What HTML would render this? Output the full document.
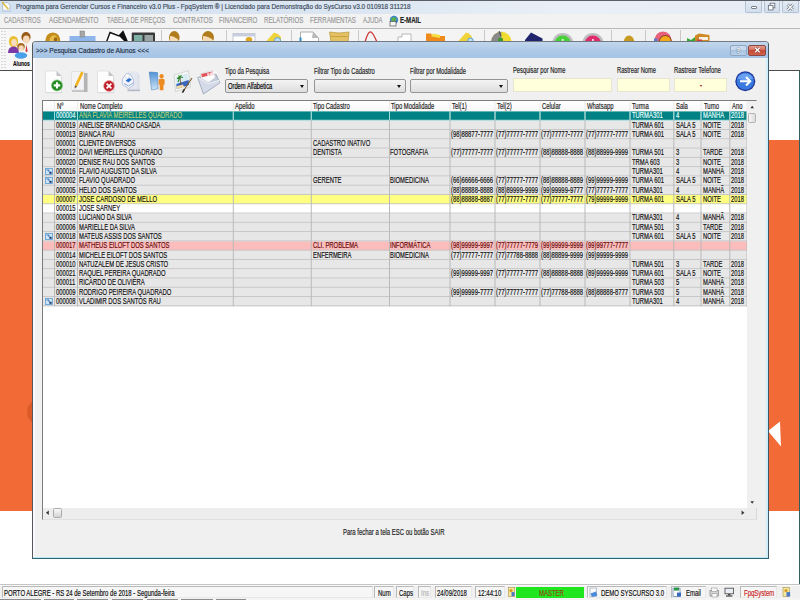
<!DOCTYPE html>
<html lang="pt-BR"><head><meta charset="utf-8"><title>Pesquisa Cadastro de Alunos</title>
<style>
html,body{margin:0;padding:0;}
body{width:800px;height:600px;overflow:hidden;position:relative;background:#fff;font-family:"Liberation Sans",sans-serif;}
.a{position:absolute;}
.t{position:absolute;white-space:nowrap;font-size:8.7px;line-height:10px;color:#111;-webkit-text-stroke:.18px;transform:scaleX(.676);transform-origin:0 0;}
.m{color:#9a9a9a;font-size:8px;transform:scaleX(.8);}
.tt{color:#3b4a5c;font-size:7.8px;transform:scaleX(.82);}
.dt{color:#1e2d45;font-size:7.8px;transform:scaleX(.83);}
.sb{font-size:8.2px;transform:scaleX(.73);color:#111;}
.lb{color:#222;}
.row{position:absolute;left:43px;width:702.8px;height:8.4px;background:#eaeaea;}
.vl{position:absolute;top:101px;width:1px;background:#b4b4b4;}
.sel{background:#008284;}
.yel{background:#ffff82;}
.wht{background:#ffffff;}
.pnk{background:#fbbcbc;}
.cb{position:absolute;top:79.3px;height:11.6px;border:1px solid #949494;border-radius:2px;background:linear-gradient(#f4f4f4,#dedede);box-sizing:content-box;}
.cb i{position:absolute;right:3.5px;top:5px;width:0;height:0;border-left:2.5px solid transparent;border-right:2.5px solid transparent;border-top:3px solid #111;}
.in{position:absolute;top:77.5px;height:14.5px;background:#ffffdc;border:1px solid #e6e6d0;box-sizing:border-box;}
.pn{position:absolute;top:586px;height:12px;border:1px solid #b9b9b9;border-right-color:#e8e8e8;border-bottom-color:#e8e8e8;box-sizing:border-box;background:#f6f6f6;}
.sep{position:absolute;top:30px;width:1px;height:12px;background:#c8c8c8;}
</style></head><body>

<div class="a" style="left:0;top:0;width:800px;height:14px;background:linear-gradient(90deg,#d3e1f0 0%,#dbe6f2 45%,#e9eff6 70%,#e6edf5 100%);"></div>
<div class="a" style="left:0;top:0;width:800px;height:1.2px;background:#5c6066;"></div>
<div class="a" style="left:0;top:14px;width:800px;height:14.5px;background:#f2f2f2;"></div>
<div class="a" style="left:0;top:28px;width:800px;height:1px;background:#b9b9b9;"></div>
<div class="a" style="left:0;top:29px;width:800px;height:41.5px;background:linear-gradient(90deg,#f7f7f7,#f1f1f1);"></div>
<div class="a" style="left:0;top:70.2px;width:800px;height:1.3px;background:#4c4c4c;"></div>
<div class="a" style="left:799px;top:71px;width:1px;height:513px;background:#2f5f5f;"></div>
<div class="a" style="left:0;top:140px;width:799px;height:371px;background:#f26a36;"></div>
<div class="a" style="left:27.4px;top:398.5px;width:26px;height:26px;border-radius:50%;background:#dc5a28;"></div>
<svg class="a" style="left:768px;top:420px" width="16" height="30"><polygon points="0,11 12,1.5 13,26.5" fill="#fff"/></svg>
<svg class="a" style="left:1px;top:1px" width="12" height="12"><path d="M1.6 1.6 L6.4 1.6 L9 4.2 L9 10.4 L1.6 10.4 Z" fill="#fbfbf6" stroke="#9aaec4" stroke-width=".7"/><path d="M1.6 8.6 H9 V10.4 H1.6 Z" fill="#cfdcec"/><path d="M1 1 L7.4 8.2" stroke="#e8cc50" stroke-width="1.6"/><path d="M1 1 L7.4 8.2" stroke="#a88a30" stroke-width=".4"/></svg>
<span class="t tt" style="left:16.4px;top:2.0px;font-size:7.9px;transform:scaleX(0.808);">Programa para Gerenciar Cursos e Financeiro v3.0 Plus - FpqSystem ® | Licenciado para  Demonstração do SysCurso v3.0 010918 311218</span>
<div class="a" style="left:745px;top:1px;width:17px;height:11.5px;border:1px solid #b3c2d4;border-top:none;border-radius:0 0 2px 2px;box-sizing:border-box;background:linear-gradient(#e3ebf4,#d2deeb);"></div>
<div class="a" style="left:763.5px;top:1px;width:16.5px;height:11.5px;border:1px solid #b3c2d4;border-top:none;border-radius:0 0 2px 2px;box-sizing:border-box;background:linear-gradient(#e3ebf4,#d2deeb);"></div>
<div class="a" style="left:782px;top:1px;width:16.5px;height:11.5px;border:1px solid #b3c2d4;border-top:none;border-radius:0 0 2px 2px;box-sizing:border-box;background:linear-gradient(#e3ebf4,#d2deeb);"></div>
<div class="a" style="left:750.5px;top:6.2px;width:6px;height:2.4px;border:1px solid #77818c;border-radius:1px;box-sizing:border-box;background:#fff;"></div>
<svg class="a" style="left:767px;top:2px" width="10" height="10"><rect x="3.2" y="1.2" width="4.6" height="4.6" fill="#fff" stroke="#6c7682" stroke-width=".9"/><rect x="1.4" y="3.4" width="4.6" height="4.6" fill="#fff" stroke="#6c7682" stroke-width=".9"/></svg>
<svg class="a" style="left:786px;top:2.5px" width="9" height="9"><path d="M1.5 1.5 L7 7 M7 1.5 L1.5 7" stroke="#6c7682" stroke-width="2.6"/><path d="M1.5 1.5 L7 7 M7 1.5 L1.5 7" stroke="#fff" stroke-width="1.2"/></svg>
<span class="t m" style="left:4.3px;top:15.3px;font-size:8.4px;transform:scaleX(0.702);">CADASTROS</span>
<span class="t m" style="left:49.0px;top:15.3px;font-size:8.4px;transform:scaleX(0.754);">AGENDAMENTO</span>
<span class="t m" style="left:106.5px;top:15.3px;font-size:8.4px;transform:scaleX(0.705);">TABELA DE PREÇOS</span>
<span class="t m" style="left:172.5px;top:15.3px;font-size:8.4px;transform:scaleX(0.770);">CONTRATOS</span>
<span class="t m" style="left:218.5px;top:15.3px;font-size:8.4px;transform:scaleX(0.743);">FINANCEIRO</span>
<span class="t m" style="left:263.5px;top:15.3px;font-size:8.4px;transform:scaleX(0.738);">RELATÓRIOS</span>
<span class="t m" style="left:309.5px;top:15.3px;font-size:8.4px;transform:scaleX(0.732);">FERRAMENTAS</span>
<span class="t m" style="left:362.5px;top:15.3px;font-size:8.4px;transform:scaleX(0.708);">AJUDA</span>
<svg class="a" style="left:389px;top:14.6px" width="10" height="12"><circle cx="5" cy="5" r="4.2" fill="#3d86c8"/><path d="M2.4 3.5 Q4.5 1 7.5 3.5 Q5.5 6 7 8.2 Q3.6 9 2.4 6.5 Z" fill="#5fb04a"/><rect x="1" y="6.6" width="6" height="4.4" fill="#f6f6f6" stroke="#555" stroke-width=".7"/></svg>
<span class="t m" style="left:400.0px;top:15.3px;font-size:8.3px;transform:scaleX(0.735);font-weight:bold;color:#222;">E-MAIL</span>
<svg class="a" style="left:0;top:30px" width="8" height="40"><rect x="1.5" y="1" width="1" height="1" fill="#b8b8b8"/><rect x="4.5" y="1" width="1" height="1" fill="#b8b8b8"/><rect x="1.5" y="4" width="1" height="1" fill="#b8b8b8"/><rect x="4.5" y="4" width="1" height="1" fill="#b8b8b8"/><rect x="1.5" y="7" width="1" height="1" fill="#b8b8b8"/><rect x="4.5" y="7" width="1" height="1" fill="#b8b8b8"/><rect x="1.5" y="10" width="1" height="1" fill="#b8b8b8"/><rect x="4.5" y="10" width="1" height="1" fill="#b8b8b8"/><rect x="1.5" y="13" width="1" height="1" fill="#b8b8b8"/><rect x="4.5" y="13" width="1" height="1" fill="#b8b8b8"/><rect x="1.5" y="16" width="1" height="1" fill="#b8b8b8"/><rect x="4.5" y="16" width="1" height="1" fill="#b8b8b8"/><rect x="1.5" y="19" width="1" height="1" fill="#b8b8b8"/><rect x="4.5" y="19" width="1" height="1" fill="#b8b8b8"/><rect x="1.5" y="22" width="1" height="1" fill="#b8b8b8"/><rect x="4.5" y="22" width="1" height="1" fill="#b8b8b8"/><rect x="1.5" y="25" width="1" height="1" fill="#b8b8b8"/><rect x="4.5" y="25" width="1" height="1" fill="#b8b8b8"/><rect x="1.5" y="28" width="1" height="1" fill="#b8b8b8"/><rect x="4.5" y="28" width="1" height="1" fill="#b8b8b8"/><rect x="1.5" y="31" width="1" height="1" fill="#b8b8b8"/><rect x="4.5" y="31" width="1" height="1" fill="#b8b8b8"/><rect x="1.5" y="34" width="1" height="1" fill="#b8b8b8"/><rect x="4.5" y="34" width="1" height="1" fill="#b8b8b8"/><rect x="1.5" y="37" width="1" height="1" fill="#b8b8b8"/><rect x="4.5" y="37" width="1" height="1" fill="#b8b8b8"/></svg>
<svg class="a" style="left:5px;top:30px" width="28" height="30" viewBox="0 0 28 30">
<ellipse cx="21" cy="7" rx="4.6" ry="5" fill="#9a5a18"/><ellipse cx="21.3" cy="9.5" rx="3.3" ry="4" fill="#f6d9b8"/>
<path d="M16 22 Q16 14 21 14 Q27 14 27 22 Z" fill="#f4f4f4"/><path d="M21.5 14.5 L22.6 21 L21.5 22.5 L20.5 21 Z" fill="#d0303a"/>
<ellipse cx="8.5" cy="11.5" rx="4.6" ry="5.6" fill="#e8c030"/><ellipse cx="9" cy="12.5" rx="2.8" ry="3.4" fill="#f8dcc0"/>
<path d="M3 23 Q3 16.5 8.5 16.5 Q14 16.5 14 23 Z" fill="#7a3aa8"/>
<ellipse cx="16" cy="16.5" rx="3.8" ry="3.6" fill="#a86a20"/><ellipse cx="16.2" cy="18" rx="2.6" ry="2.7" fill="#f6d9b8"/>
<ellipse cx="16" cy="25.5" rx="6.2" ry="3.2" fill="#4aa0e8"/>
</svg>
<span class="t " style="left:13.2px;top:59.4px;font-size:7.8px;transform:scaleX(0.636);font-weight:bold;color:#111;">Alunos</span>
<svg class="a" style="left:0;top:28px" width="800" height="14.5" viewBox="0 0 800 14.5">
<path d="M45.2 14.5 Q45.4 4.5 53 4.5 Q60.2 4.5 60.4 14.5 Z" fill="#c48c18"/><path d="M49 14.5 Q49.5 7.5 54 7.2 Q58 7.5 58 14.5 Z" fill="#e6bc4a"/><ellipse cx="55.6" cy="11.6" rx="1.7" ry="2.3" fill="#9a6810"/>
<rect x="69.5" y="8" width="26" height="6" fill="#8fb6ea"/><rect x="80" y="3" width="4.5" height="6" fill="#a8a8a8" stroke="#777" stroke-width=".5"/>
<path d="M106.5 14 L110 4.5 L119 8 L123 3.5 L127 13 L127 14 Z" fill="#fff" stroke="#111" stroke-width="1.4"/><path d="M119 8 L123 3.5 L127 13 L124 13 Z" fill="#111"/>
<rect x="131.7" y="4.5" width="23.3" height="10" rx="1" fill="#3a3a3a"/><rect x="134" y="7" width="8.5" height="6" fill="#7fb0a8"/><rect x="144.5" y="7" width="8.5" height="6" fill="#9aa4a4"/>
<ellipse cx="174.3" cy="9.5" rx="5.3" ry="6.5" fill="#b07c1c"/><path d="M170 8 Q174 8 178.5 12 L178.5 15 L170 15 Z" fill="#f6ddb8"/>
<ellipse cx="208" cy="9.5" rx="6" ry="6.5" fill="#b07c1c"/><path d="M203 8 Q208 8 213 12 L213 15 L203 15 Z" fill="#f6ddb8"/>
<rect x="233" y="5.5" width="22" height="9" fill="#fff" stroke="#b8bcc8" stroke-width=".8"/><rect x="233" y="5.5" width="22" height="3" fill="#c8cede"/><ellipse cx="249" cy="11.5" rx="3.3" ry="2.6" fill="#e0a820"/>
<path d="M266 13.5 L274 4.5 L278 6 L281 9 L281 14 L266 14 Z" fill="#f0d23c"/><circle cx="277.5" cy="12.5" r="3" fill="#bfe0f4" stroke="#4a9ad8" stroke-width=".9"/>
<path d="M300.5 14 L300.5 4 L313 4 L318.5 10 L318.5 14 Z" fill="#fff" stroke="#9a9a9a" stroke-width=".8"/><path d="M313 4 L318.5 10 L312 10 Z" fill="#b8b8b8"/><rect x="299.5" y="9.5" width="2" height="4.5" fill="#2a8ac8"/>
<path d="M329.5 4 Q339 6 349 4 L348 14 L331 14 Z" fill="#e4c264" stroke="#b89030" stroke-width=".7"/><rect x="331" y="8" width="16.5" height="1" fill="#c8a040"/>
<path d="M365 14 Q368 3 371 4 Q373 5 377 14" fill="none" stroke="#d03434" stroke-width="1.3"/>
<path d="M398 14 L398 9 L402 9 L402 6 L411 6 L411 14" fill="#fff" stroke="#a8a8a8" stroke-width=".8"/>
<path d="M426 14 L426 5.5 L431 5.5 L432.5 8 L445 8 L445 14 Z" fill="#f08a1a"/><path d="M431 8.5 L433 5.5 L440 7 L440 10 Z" fill="#f4dc40"/>
<path d="M458 13.5 L466 4.5 L469 5.5 L472 9 L472 14 L458 14 Z" fill="#f0d23c"/><circle cx="470.5" cy="12.8" r="2.8" fill="#bfe0f4" stroke="#4a9ad8" stroke-width=".9"/>
<path d="M491 14 A10.3 10.3 0 0 1 511.6 14 Z" fill="#f0dc30"/><path d="M491 14 A10.3 10.3 0 0 1 501.3 3.7 L501.3 14 Z" fill="#8a8a8a"/><circle cx="500.5" cy="12" r="2.6" fill="#3c9a30"/><path d="M499 3 L501 8" stroke="#444" stroke-width="1"/>
<path d="M525 12 L531 4.5 L542.5 10.5 L542.5 14 L525 14 Z" fill="#20246c"/>
<circle cx="562.7" cy="16" r="10.9" fill="#bdbdbd"/><circle cx="562.7" cy="16" r="8.4" fill="#48d038"/><rect x="561.8" y="11" width="1.8" height="4" fill="#d8f8d0"/>
<circle cx="592.9" cy="16" r="10.9" fill="#bdbdbd"/><circle cx="592.9" cy="16" r="8.4" fill="#e02c6c"/><rect x="592" y="11" width="1.8" height="4" fill="#fbd0e0"/>
<path d="M623.8 14 A5.2 6.5 0 0 1 634.2 14 Z" fill="#c89a20"/>
<path d="M654 14 Q655 3.5 663 3.5 Q671 3.5 672 14 Z" fill="#e8607a"/><path d="M659 14 Q660 7.5 665.5 7.5 Q671 8 671.5 14 Z" fill="#f4a81c" stroke="#5a2a10" stroke-width=".7"/><rect x="654" y="10.5" width="3.4" height="3.5" fill="#5a78d0"/>
<path d="M687 10 L691 12 L695 9 L695 14 L687 14 Z" fill="#38a838"/><path d="M695 7.5 L699 5.5 L709.5 7 L709.5 14 L695 14 Z" fill="#d08a24"/><rect x="699" y="9" width="9" height="3" fill="#f8f0e0"/><rect x="697" y="11.5" width="5" height="2.5" fill="#d03a3a"/>
</svg>
<div class="sep" style="left:161px"></div>
<div class="sep" style="left:226.3px"></div>
<div class="sep" style="left:291px"></div>
<div class="sep" style="left:357.5px"></div>
<div class="sep" style="left:483.8px"></div>
<div class="sep" style="left:610.5px"></div>
<div class="sep" style="left:645.3px"></div>
<div class="sep" style="left:680px"></div>
<div class="a" style="left:31.5px;top:41.3px;width:737px;height:518px;box-sizing:border-box;border:1px solid #4a545e;border-color:#727a84 #3f5a66 #2f6676 #585858;border-radius:4px 4px 0 0;background:#f0f0f0;overflow:hidden;">
<div class="a" style="left:0;top:0;width:737px;height:15.6px;background:linear-gradient(#c2d6ec,#afcae8 50%,#a5c3e5);"></div>
<div class="a" style="left:0;top:15.6px;width:2px;height:502px;background:#f7f9fc;"></div>
<div class="a" style="left:733.6px;top:15.6px;width:1.6px;height:502px;background:#cdeef8;"></div>
<div class="a" style="left:0;top:514.3px;width:737px;height:1.8px;background:#b8eaf4;"></div>
</div>
<span class="t dt" style="left:35.9px;top:45.7px;font-size:8px;transform:scaleX(0.822);">&gt;&gt;&gt; Pesquisa Cadastro de Alunos &lt;&lt;&lt;</span>
<div class="a" style="left:730px;top:44.5px;width:16.5px;height:11px;box-sizing:border-box;border:1px solid #8fa6c0;border-radius:2px;background:linear-gradient(#c9daee 45%,#a9c3e2 50%,#b9d0ea);"></div>
<span class="t " style="left:736.0px;top:45.6px;font-weight:bold;font-size:8px;color:#fff;text-shadow:0 0 1.2px #344a66,0 0 1.2px #344a66;transform:scaleX(.9)">?</span>
<div class="a" style="left:748px;top:44.5px;width:17.5px;height:11px;box-sizing:border-box;border:1px solid #8a4a44;border-radius:2px;background:linear-gradient(#e39a8c 0%,#d7705e 45%,#c44a36 50%,#d0604c 100%);"></div>
<svg class="a" style="left:752.5px;top:46px" width="9" height="8"><path d="M2.2 1.8 L6.6 6.2 M6.6 1.8 L2.2 6.2" stroke="#8a4038" stroke-width="2.4"/><path d="M2.2 1.8 L6.6 6.2 M6.6 1.8 L2.2 6.2" stroke="#fff" stroke-width="1.3"/></svg>
<svg class="a" style="left:0;top:0" width="800" height="100" viewBox="0 0 800 100">
<g><path d="M46.2 72 L57 72 L62.2 77 L62.2 93.2 L46.2 93.2 Z" fill="#d6d6d6"/><path d="M45.5 71 L56.5 71 L61.5 76 L61.5 92.5 L45.5 92.5 Z" fill="#fdfdfd" stroke="#d4d4d4" stroke-width=".6"/><path d="M56.5 71 L61.5 76 L56.5 76 Z" fill="#c4c4c4"/>
<circle cx="57" cy="85.4" r="5.5" fill="#258a22" stroke="#7cc878" stroke-width=".7"/><path d="M53.8 85.4 H60.2 M57 82.2 V88.6" stroke="#fff" stroke-width="2.1"/></g>
<g><rect x="72" y="73" width="15" height="19" fill="#c4c4c4"/><path d="M71.5 71.5 L84 71.5 L84 90 L71.5 90 Z" fill="#f4f4f8" stroke="#d4d4d8" stroke-width=".5"/><rect x="84" y="73" width="3.5" height="19" fill="#b4b4b4"/>
<path d="M81.2 71.5 L83.6 72.8 L77.2 86.5 L74.8 85.2 Z" fill="#f2b41c"/><path d="M74.8 85.2 L77.2 86.5 L74.6 88.8 Z" fill="#6a5a40"/></g>
<g><path d="M98.2 72 L109 72 L114.2 77 L114.2 93.2 L98.2 93.2 Z" fill="#d6d6d6"/><path d="M97.5 71 L108.5 71 L113.5 76 L113.5 92.5 L97.5 92.5 Z" fill="#fdfdfd" stroke="#d4d4d4" stroke-width=".6"/><path d="M108.5 71 L113.5 76 L108.5 76 Z" fill="#c4c4c4"/>
<circle cx="109" cy="86" r="5.4" fill="#c0202a" stroke="#e89a9a" stroke-width=".6"/><path d="M106.6 83.6 L111.4 88.4 M111.4 83.6 L106.6 88.4" stroke="#fff" stroke-width="1.7"/></g>
<g><path d="M128 71.5 L136.5 71.5 L140 75 L140 91 L127.5 91 Z" fill="#e4e7f0"/><path d="M127.5 89.6 H140 V91.2 H127.5 Z" fill="#b4b8c6"/><path d="M138.2 74 V90" stroke="#c4c8d4" stroke-width=".7" stroke-dasharray="1 1"/>
<path d="M122.3 79 L126.5 73.2 L130.5 74.5 L133.6 80 L133.6 85 L128.5 88.6 L122.3 84.5 Z" fill="#f2f5fb" stroke="#a8b6d4" stroke-width=".8"/><path d="M125.6 80.6 L129.2 78 L131.8 79.6 L128.4 82.6 Z" fill="#2f6fc8"/><path d="M124 83.5 L128.4 86 L133 83" stroke="#8aa0cc" stroke-width=".9" fill="none"/><path d="M126.2 73.6 L129.8 74.8 L128 78.5 L124.6 77 Z" fill="#fff" stroke="#b8c4dc" stroke-width=".5"/></g>
<g><defs><linearGradient id="bk" x1="0" y1="0" x2="0" y2="1"><stop offset="0" stop-color="#4f92d6"/><stop offset="1" stop-color="#cfe4f6"/></linearGradient></defs>
<path d="M149.2 72 L157.6 72.6 L158 88.8 L151.6 90 Z" fill="url(#bk)" stroke="#3a78b8" stroke-width=".5"/>
<circle cx="161.6" cy="76.2" r="2.1" fill="#ee8a22"/><path d="M158.6 79.4 Q161.6 77.8 164.6 79.4 L164.6 84.6 L163.6 84.6 L163.4 90.2 L159.8 90.2 L159.6 84.6 L158.6 84.6 Z" fill="#ee8a22"/></g>
<g><path d="M174 75 L188.5 70.5 L190.5 87 L175.5 91.5 Z" fill="#f4f6f4" stroke="#b8c4bc" stroke-width=".6"/><path d="M175.5 77.5 L187.5 73.5 L189 85 L176.8 89 Z" fill="#d8ecf4"/><path d="M176.3 84 L188.6 80 L189 85 L176.8 89 Z" fill="#3a66c0"/><path d="M176.5 86.3 L183 84.5 L184 87 L176.8 89 Z" fill="#f0dca0"/>
<path d="M180 77 L178 82 M180 77 L177 78.5 M180 77 L183 77.5 M180 77 L181.5 75 M180 77 L178.5 75.5" stroke="#2a8a30" stroke-width="1.1"/><path d="M180 77.5 L180.8 85" stroke="#6a4a20" stroke-width=".8"/>
<path d="M192 78 L184 90" stroke="#7a5a30" stroke-width="1.1"/><path d="M184.4 89.4 L182.4 92.6" stroke="#222" stroke-width="1.6"/></g>
<g><path d="M197.6 77.4 L215.6 73.6 L220 82.8 L203.4 94 Z" fill="#c2cadb" stroke="#8c96ac" stroke-width=".7"/>
<path d="M200.4 73.6 L212.6 70.6 L215.4 77.4 L208.6 82.6 L201.4 78.4 Z" fill="#fbfbfb" stroke="#c8c8d0" stroke-width=".5"/><path d="M201.2 74 L212.4 71.4 L213.4 74.4 L202 77.2 Z" fill="#e05656"/><path d="M198.4 78 L208.6 83.6 L219 80.4 L219.6 82.6 L203.6 93.2 Z" fill="#d4dae8"/><path d="M198.4 78 L208.6 83.6 L219 80.4" fill="none" stroke="#f4f6fa" stroke-width=".9"/></g>
<g><circle cx="745.3" cy="81.2" r="10" fill="#203a9a"/><circle cx="745.3" cy="81.2" r="8.6" fill="#3a7ae0"/><path d="M737.5 78.5 A8.6 8.6 0 0 1 753.1 78.5 Q745.3 82 737.5 78.5 Z" fill="#6aa0f0"/>
<path d="M740 81.2 H749.6 M746 77 L750.2 81.2 L746 85.4" stroke="#fff" stroke-width="2.1" fill="none"/></g>
</svg>
<span class="t " style="left:207.0px;top:72.6px;font-size:3.4px;font-weight:bold;color:#fff;transform:rotate(-16deg) scaleX(.8);line-height:4px">E-MAIL</span>
<span class="t lb" style="left:225.4px;top:66.4px;font-size:8.5px;transform:scaleX(0.676);">Tipo da Pesquisa</span>
<span class="t lb" style="left:313.7px;top:66.4px;font-size:8.5px;transform:scaleX(0.685);">Filtrar Tipo do Cadastro</span>
<span class="t lb" style="left:410.0px;top:66.0px;font-size:8.5px;transform:scaleX(0.677);">Filtrar por Modalidade</span>
<span class="t lb" style="left:513.0px;top:64.6px;font-size:8.5px;transform:scaleX(0.678);">Pesquisar por Nome</span>
<span class="t lb" style="left:617.0px;top:64.6px;font-size:8.5px;transform:scaleX(0.677);">Rastrear Nome</span>
<span class="t lb" style="left:673.8px;top:64.6px;font-size:8.5px;transform:scaleX(0.699);">Rastrear Telefone</span>
<div class="cb" style="left:225px;width:81px"><i></i></div>
<div class="cb" style="left:313.8px;width:90px"><i></i></div>
<div class="cb" style="left:410px;width:95.5px"><i></i></div>
<span class="t lb" style="left:227.6px;top:80.6px;font-size:8.7px;transform:scaleX(0.664);color:#000">Ordem Alfabetica</span>
<div class="in" style="left:513px;width:99px"></div>
<div class="in" style="left:617px;width:52.5px"></div>
<div class="in" style="left:673.8px;width:53.2px"></div>
<span class="t " style="left:700.0px;top:79.5px;color:#a01818;font-weight:bold">-</span>
<div class="a" style="left:42.3px;top:100.2px;width:715px;height:419.5px;box-sizing:border-box;border:1px solid #7c7c7c;border-right-color:#d8d8d8;border-bottom-color:#e0e0e0;background:#fff;"></div>
<div class="a" style="left:43.3px;top:101.2px;width:703.7px;height:10.2px;background:linear-gradient(#ffffff,#f7f7f7);"></div>
<span class="t lb" style="left:56.6px;top:100.6px;">Nº</span>
<span class="t lb" style="left:79.6px;top:100.6px;">Nome Completo</span>
<span class="t lb" style="left:235.1px;top:100.6px;">Apelido</span>
<span class="t lb" style="left:313.3px;top:100.6px;">Tipo Cadastro</span>
<span class="t lb" style="left:390.8px;top:100.6px;">Tipo Modalidade</span>
<span class="t lb" style="left:452.1px;top:100.6px;">Tel(1)</span>
<span class="t lb" style="left:497.1px;top:100.6px;">Tel(2)</span>
<span class="t lb" style="left:542.1px;top:100.6px;">Celular</span>
<span class="t lb" style="left:586.6px;top:100.6px;">Whatsapp</span>
<span class="t lb" style="left:631.6px;top:100.6px;">Turma</span>
<span class="t lb" style="left:675.8px;top:100.6px;">Sala</span>
<span class="t lb" style="left:704.1px;top:100.6px;">Turno</span>
<span class="t lb" style="left:731.6px;top:100.6px;">Ano</span>
<svg class="a" style="left:0;top:100px" width="800" height="210" viewBox="0 100 800 210"><rect x="43" y="111.40" width="704" height="9.28" fill="#008284"/><rect x="43" y="120.68" width="704" height="9.28" fill="#e7e7e7"/><rect x="43" y="129.96" width="704" height="9.28" fill="#e7e7e7"/><rect x="43" y="139.24" width="704" height="9.28" fill="#e7e7e7"/><rect x="43" y="148.52" width="704" height="9.28" fill="#e7e7e7"/><rect x="43" y="157.80" width="704" height="9.28" fill="#e7e7e7"/><rect x="43" y="167.08" width="704" height="9.28" fill="#e7e7e7"/><rect x="43" y="176.36" width="704" height="9.28" fill="#e7e7e7"/><rect x="43" y="185.64" width="704" height="9.28" fill="#e7e7e7"/><rect x="43" y="194.92" width="704" height="9.28" fill="#ffff82"/><rect x="43" y="204.20" width="704" height="9.28" fill="#ffffff"/><rect x="43" y="213.48" width="704" height="9.28" fill="#e7e7e7"/><rect x="43" y="222.76" width="704" height="9.28" fill="#e7e7e7"/><rect x="43" y="232.04" width="704" height="9.28" fill="#e7e7e7"/><rect x="43" y="241.32" width="704" height="9.28" fill="#fbbcbc"/><rect x="43" y="250.60" width="704" height="9.28" fill="#e7e7e7"/><rect x="43" y="259.88" width="704" height="9.28" fill="#e7e7e7"/><rect x="43" y="269.16" width="704" height="9.28" fill="#e7e7e7"/><rect x="43" y="278.44" width="704" height="9.28" fill="#e7e7e7"/><rect x="43" y="287.72" width="704" height="9.28" fill="#e7e7e7"/><rect x="43" y="297.00" width="704" height="9.28" fill="#e7e7e7"/><rect x="43" y="119.78" width="704" height=".9" fill="#cfeeee"/><rect x="43" y="129.06" width="704" height=".9" fill="#c4c4c4"/><rect x="43" y="138.34" width="704" height=".9" fill="#c4c4c4"/><rect x="43" y="147.62" width="704" height=".9" fill="#c4c4c4"/><rect x="43" y="156.90" width="704" height=".9" fill="#c4c4c4"/><rect x="43" y="166.18" width="704" height=".9" fill="#c4c4c4"/><rect x="43" y="175.46" width="704" height=".9" fill="#c4c4c4"/><rect x="43" y="184.74" width="704" height=".9" fill="#c4c4c4"/><rect x="43" y="194.02" width="704" height=".9" fill="#c4c4c4"/><rect x="43" y="203.30" width="704" height=".9" fill="#c4c4c4"/><rect x="43" y="212.58" width="704" height=".9" fill="#c4c4c4"/><rect x="43" y="221.86" width="704" height=".9" fill="#c4c4c4"/><rect x="43" y="231.14" width="704" height=".9" fill="#c4c4c4"/><rect x="43" y="240.42" width="704" height=".9" fill="#c4c4c4"/><rect x="43" y="249.70" width="704" height=".9" fill="#c4c4c4"/><rect x="43" y="258.98" width="704" height=".9" fill="#c4c4c4"/><rect x="43" y="268.26" width="704" height=".9" fill="#c4c4c4"/><rect x="43" y="277.54" width="704" height=".9" fill="#c4c4c4"/><rect x="43" y="286.82" width="704" height=".9" fill="#c4c4c4"/><rect x="43" y="296.10" width="704" height=".9" fill="#c4c4c4"/><rect x="43" y="305.38" width="704" height=".9" fill="#c4c4c4"/><rect x="54.0" y="101.2" width="1" height="10.2" fill="#ececec"/><rect x="54.0" y="111.40" width="1" height="194.88" fill="#bababa"/><rect x="54.0" y="111.40" width="1" height="8.38" fill="#9adede"/><rect x="77.0" y="101.2" width="1" height="10.2" fill="#ececec"/><rect x="77.0" y="111.40" width="1" height="194.88" fill="#bababa"/><rect x="77.0" y="111.40" width="1" height="8.38" fill="#9adede"/><rect x="232.8" y="101.2" width="1" height="10.2" fill="#ececec"/><rect x="232.8" y="111.40" width="1" height="194.88" fill="#bababa"/><rect x="232.8" y="111.40" width="1" height="8.38" fill="#9adede"/><rect x="310.8" y="101.2" width="1" height="10.2" fill="#ececec"/><rect x="310.8" y="111.40" width="1" height="194.88" fill="#bababa"/><rect x="310.8" y="111.40" width="1" height="8.38" fill="#9adede"/><rect x="389.0" y="101.2" width="1" height="10.2" fill="#ececec"/><rect x="389.0" y="111.40" width="1" height="194.88" fill="#bababa"/><rect x="389.0" y="111.40" width="1" height="8.38" fill="#9adede"/><rect x="449.5" y="101.2" width="1" height="10.2" fill="#ececec"/><rect x="449.5" y="111.40" width="1" height="194.88" fill="#bababa"/><rect x="449.5" y="111.40" width="1" height="8.38" fill="#9adede"/><rect x="494.5" y="101.2" width="1" height="10.2" fill="#ececec"/><rect x="494.5" y="111.40" width="1" height="194.88" fill="#bababa"/><rect x="494.5" y="111.40" width="1" height="8.38" fill="#9adede"/><rect x="539.5" y="101.2" width="1" height="10.2" fill="#ececec"/><rect x="539.5" y="111.40" width="1" height="194.88" fill="#bababa"/><rect x="539.5" y="111.40" width="1" height="8.38" fill="#9adede"/><rect x="584.5" y="101.2" width="1" height="10.2" fill="#ececec"/><rect x="584.5" y="111.40" width="1" height="194.88" fill="#bababa"/><rect x="584.5" y="111.40" width="1" height="8.38" fill="#9adede"/><rect x="629.5" y="101.2" width="1" height="10.2" fill="#ececec"/><rect x="629.5" y="111.40" width="1" height="194.88" fill="#bababa"/><rect x="629.5" y="111.40" width="1" height="8.38" fill="#9adede"/><rect x="673.3" y="101.2" width="1" height="10.2" fill="#ececec"/><rect x="673.3" y="111.40" width="1" height="194.88" fill="#bababa"/><rect x="673.3" y="111.40" width="1" height="8.38" fill="#9adede"/><rect x="700.5" y="101.2" width="1" height="10.2" fill="#ececec"/><rect x="700.5" y="111.40" width="1" height="194.88" fill="#bababa"/><rect x="700.5" y="111.40" width="1" height="8.38" fill="#9adede"/><rect x="729.3" y="101.2" width="1" height="10.2" fill="#ececec"/><rect x="729.3" y="111.40" width="1" height="194.88" fill="#bababa"/><rect x="729.3" y="111.40" width="1" height="8.38" fill="#9adede"/><rect x="746.5" y="101.2" width="1" height="10.2" fill="#ececec"/><rect x="746.5" y="111.40" width="1" height="194.88" fill="#bababa"/><rect x="746.5" y="111.40" width="1" height="8.38" fill="#9adede"/></svg>
<span class="t " style="left:56.0px;top:110.3px;color:#e4ffff">000004</span>
<span class="t " style="left:79.0px;top:110.3px;color:#b9cc7c">ANA FLAVIA MEIRELLES QUADRADO</span>
<span class="t " style="left:631.7px;top:110.3px;color:#e4ffff">TURMA301</span>
<span class="t " style="left:675.5px;top:110.3px;color:#e4ffff">4</span>
<span class="t " style="left:703.0px;top:110.3px;color:#e4ffff">MANHÃ</span>
<span class="t " style="left:731.4px;top:110.3px;color:#e4ffff">2018</span>
<span class="t " style="left:56.0px;top:119.6px;">000019</span>
<span class="t " style="left:79.0px;top:119.6px;">ANELISE BRANDAO CASADA</span>
<span class="t " style="left:631.7px;top:119.6px;">TURMA 601</span>
<span class="t " style="left:675.5px;top:119.6px;">SALA 5</span>
<span class="t " style="left:703.0px;top:119.6px;">NOITE</span>
<span class="t " style="left:731.4px;top:119.6px;">2018</span>
<span class="t " style="left:56.0px;top:128.9px;">000013</span>
<span class="t " style="left:79.0px;top:128.9px;">BIANCA RAU</span>
<span class="t " style="left:451.1px;top:128.9px;;transform:scaleX(.68)">(98)88877-7777</span>
<span class="t " style="left:496.1px;top:128.9px;;transform:scaleX(.68)">(77)77777-7777</span>
<span class="t " style="left:541.1px;top:128.9px;;transform:scaleX(.68)">(77)77777-7777</span>
<span class="t " style="left:586.1px;top:128.9px;;transform:scaleX(.68)">(77)77777-7777</span>
<span class="t " style="left:631.7px;top:128.9px;">TURMA 601</span>
<span class="t " style="left:675.5px;top:128.9px;">SALA 5</span>
<span class="t " style="left:703.0px;top:128.9px;">NOITE</span>
<span class="t " style="left:731.4px;top:128.9px;">2018</span>
<span class="t " style="left:56.0px;top:138.1px;">000001</span>
<span class="t " style="left:79.0px;top:138.1px;">CLIENTE DIVERSOS</span>
<span class="t " style="left:312.7px;top:138.1px;">CADASTRO INATIVO</span>
<span class="t " style="left:56.0px;top:147.4px;">000012</span>
<span class="t " style="left:79.0px;top:147.4px;">DAVI MEIRELLES QUADRADO</span>
<span class="t " style="left:312.7px;top:147.4px;">DENTISTA</span>
<span class="t " style="left:390.3px;top:147.4px;">FOTOGRAFIA</span>
<span class="t " style="left:451.1px;top:147.4px;;transform:scaleX(.68)">(77)77777-7777</span>
<span class="t " style="left:496.1px;top:147.4px;;transform:scaleX(.68)">(77)77777-7777</span>
<span class="t " style="left:541.1px;top:147.4px;;transform:scaleX(.68)">(88)88888-8888</span>
<span class="t " style="left:586.1px;top:147.4px;;transform:scaleX(.68)">(88)88999-9999</span>
<span class="t " style="left:631.7px;top:147.4px;">TURMA 501</span>
<span class="t " style="left:675.5px;top:147.4px;">3</span>
<span class="t " style="left:703.0px;top:147.4px;">TARDE</span>
<span class="t " style="left:731.4px;top:147.4px;">2018</span>
<span class="t " style="left:56.0px;top:156.7px;">000020</span>
<span class="t " style="left:79.0px;top:156.7px;">DENISE RAU DOS SANTOS</span>
<span class="t " style="left:631.7px;top:156.7px;">TRMA 603</span>
<span class="t " style="left:675.5px;top:156.7px;">3</span>
<span class="t " style="left:703.0px;top:156.7px;">NOITE</span>
<span class="t " style="left:731.4px;top:156.7px;">2018</span>
<span class="t " style="left:56.0px;top:166.0px;">000016</span>
<span class="t " style="left:79.0px;top:166.0px;">FLAVIO AUGUSTO DA SILVA</span>
<span class="t " style="left:631.7px;top:166.0px;">TURMA301</span>
<span class="t " style="left:675.5px;top:166.0px;">4</span>
<span class="t " style="left:703.0px;top:166.0px;">MANHÃ</span>
<span class="t " style="left:731.4px;top:166.0px;">2018</span>
<svg class="a" style="left:44.6px;top:167.6px" width="8" height="7"><rect x=".4" y=".4" width="7" height="6" fill="#cfe6f8" stroke="#5a9ad0" stroke-width=".8"/><path d="M1.5 2 L4 2 L4 4" stroke="#2a6ab0" stroke-width=".9" fill="none"/><rect x="4.4" y="3.8" width="2.2" height="2" fill="#1a3a6a"/></svg>
<span class="t " style="left:56.0px;top:175.3px;">000002</span>
<span class="t " style="left:79.0px;top:175.3px;">FLAVIO QUADRADO</span>
<span class="t " style="left:312.7px;top:175.3px;">GERENTE</span>
<span class="t " style="left:390.3px;top:175.3px;">BIOMEDICINA</span>
<span class="t " style="left:451.1px;top:175.3px;;transform:scaleX(.68)">(66)66666-6666</span>
<span class="t " style="left:496.1px;top:175.3px;;transform:scaleX(.68)">(77)77777-7777</span>
<span class="t " style="left:541.1px;top:175.3px;;transform:scaleX(.68)">(88)88888-8889</span>
<span class="t " style="left:586.1px;top:175.3px;;transform:scaleX(.68)">(99)99999-9999</span>
<span class="t " style="left:631.7px;top:175.3px;">TURMA 601</span>
<span class="t " style="left:675.5px;top:175.3px;">SALA 5</span>
<span class="t " style="left:703.0px;top:175.3px;">NOITE</span>
<span class="t " style="left:731.4px;top:175.3px;">2018</span>
<svg class="a" style="left:44.6px;top:176.9px" width="8" height="7"><rect x=".4" y=".4" width="7" height="6" fill="#cfe6f8" stroke="#5a9ad0" stroke-width=".8"/><path d="M1.5 2 L4 2 L4 4" stroke="#2a6ab0" stroke-width=".9" fill="none"/><rect x="4.4" y="3.8" width="2.2" height="2" fill="#1a3a6a"/></svg>
<span class="t " style="left:56.0px;top:184.5px;">000005</span>
<span class="t " style="left:79.0px;top:184.5px;">HELIO DOS SANTOS</span>
<span class="t " style="left:451.1px;top:184.5px;;transform:scaleX(.68)">(88)88888-8888</span>
<span class="t " style="left:496.1px;top:184.5px;;transform:scaleX(.68)">(88)89999-9999</span>
<span class="t " style="left:541.1px;top:184.5px;;transform:scaleX(.68)">(99)99999-9777</span>
<span class="t " style="left:586.1px;top:184.5px;;transform:scaleX(.68)">(77)77777-7777</span>
<span class="t " style="left:631.7px;top:184.5px;">TURMA301</span>
<span class="t " style="left:675.5px;top:184.5px;">4</span>
<span class="t " style="left:703.0px;top:184.5px;">MANHÃ</span>
<span class="t " style="left:731.4px;top:184.5px;">2018</span>
<span class="t " style="left:56.0px;top:193.8px;">000007</span>
<span class="t " style="left:79.0px;top:193.8px;">JOSE CARDOSO DE MELLO</span>
<span class="t " style="left:451.1px;top:193.8px;;transform:scaleX(.68)">(88)88888-8887</span>
<span class="t " style="left:496.1px;top:193.8px;;transform:scaleX(.68)">(77)77777-7777</span>
<span class="t " style="left:541.1px;top:193.8px;;transform:scaleX(.68)">(77)77777-7777</span>
<span class="t " style="left:586.1px;top:193.8px;;transform:scaleX(.68)">(79)99999-9999</span>
<span class="t " style="left:631.7px;top:193.8px;">TURMA 601</span>
<span class="t " style="left:675.5px;top:193.8px;">SALA 5</span>
<span class="t " style="left:703.0px;top:193.8px;">NOITE</span>
<span class="t " style="left:731.4px;top:193.8px;">2018</span>
<span class="t " style="left:56.0px;top:203.1px;">000015</span>
<span class="t " style="left:79.0px;top:203.1px;">JOSE SARNEY</span>
<span class="t " style="left:56.0px;top:212.4px;">000003</span>
<span class="t " style="left:79.0px;top:212.4px;">LUCIANO DA SILVA</span>
<span class="t " style="left:631.7px;top:212.4px;">TURMA301</span>
<span class="t " style="left:675.5px;top:212.4px;">4</span>
<span class="t " style="left:703.0px;top:212.4px;">MANHÃ</span>
<span class="t " style="left:731.4px;top:212.4px;">2018</span>
<span class="t " style="left:56.0px;top:221.7px;">000006</span>
<span class="t " style="left:79.0px;top:221.7px;">MARIELLE DA SILVA</span>
<span class="t " style="left:631.7px;top:221.7px;">TURMA 501</span>
<span class="t " style="left:675.5px;top:221.7px;">3</span>
<span class="t " style="left:703.0px;top:221.7px;">TARDE</span>
<span class="t " style="left:731.4px;top:221.7px;">2018</span>
<span class="t " style="left:56.0px;top:230.9px;">000018</span>
<span class="t " style="left:79.0px;top:230.9px;">MATEUS ASSIS DOS SANTOS</span>
<span class="t " style="left:631.7px;top:230.9px;">TURMA 601</span>
<span class="t " style="left:675.5px;top:230.9px;">SALA 5</span>
<span class="t " style="left:703.0px;top:230.9px;">NOITE</span>
<span class="t " style="left:731.4px;top:230.9px;">2018</span>
<svg class="a" style="left:44.6px;top:232.5px" width="8" height="7"><rect x=".4" y=".4" width="7" height="6" fill="#cfe6f8" stroke="#5a9ad0" stroke-width=".8"/><path d="M1.5 2 L4 2 L4 4" stroke="#2a6ab0" stroke-width=".9" fill="none"/><rect x="4.4" y="3.8" width="2.2" height="2" fill="#1a3a6a"/></svg>
<span class="t " style="left:56.0px;top:240.2px;color:#6a0c0c">000017</span>
<span class="t " style="left:79.0px;top:240.2px;color:#6a0c0c">MATHEUS EILOFT DOS SANTOS</span>
<span class="t " style="left:312.7px;top:240.2px;color:#6a0c0c">CLI. PROBLEMA</span>
<span class="t " style="left:390.3px;top:240.2px;color:#6a0c0c">INFORMÁTICA</span>
<span class="t " style="left:451.1px;top:240.2px;color:#6a0c0c;transform:scaleX(.68)">(98)99999-9997</span>
<span class="t " style="left:496.1px;top:240.2px;color:#6a0c0c;transform:scaleX(.68)">(77)77777-7779</span>
<span class="t " style="left:541.1px;top:240.2px;color:#6a0c0c;transform:scaleX(.68)">(99)99999-9999</span>
<span class="t " style="left:586.1px;top:240.2px;color:#6a0c0c;transform:scaleX(.68)">(99)99777-7777</span>
<span class="t " style="left:56.0px;top:249.5px;">000014</span>
<span class="t " style="left:79.0px;top:249.5px;">MICHELE EILOFT DOS SANTOS</span>
<span class="t " style="left:312.7px;top:249.5px;">ENFERMEIRA</span>
<span class="t " style="left:390.3px;top:249.5px;">BIOMEDICINA</span>
<span class="t " style="left:451.1px;top:249.5px;;transform:scaleX(.68)">(77)77777-7777</span>
<span class="t " style="left:496.1px;top:249.5px;;transform:scaleX(.68)">(77)77788-8888</span>
<span class="t " style="left:541.1px;top:249.5px;;transform:scaleX(.68)">(88)88899-9999</span>
<span class="t " style="left:586.1px;top:249.5px;;transform:scaleX(.68)">(99)99999-9999</span>
<span class="t " style="left:56.0px;top:258.8px;">000010</span>
<span class="t " style="left:79.0px;top:258.8px;">NATUZALEM DE JESUS CRISTO</span>
<span class="t " style="left:631.7px;top:258.8px;">TURMA 501</span>
<span class="t " style="left:675.5px;top:258.8px;">3</span>
<span class="t " style="left:703.0px;top:258.8px;">TARDE</span>
<span class="t " style="left:731.4px;top:258.8px;">2018</span>
<span class="t " style="left:56.0px;top:268.1px;">000021</span>
<span class="t " style="left:79.0px;top:268.1px;">RAQUEL PEREIRA QUADRADO</span>
<span class="t " style="left:451.1px;top:268.1px;;transform:scaleX(.68)">(99)99999-9997</span>
<span class="t " style="left:496.1px;top:268.1px;;transform:scaleX(.68)">(77)77777-7777</span>
<span class="t " style="left:541.1px;top:268.1px;;transform:scaleX(.68)">(88)88888-8888</span>
<span class="t " style="left:586.1px;top:268.1px;;transform:scaleX(.68)">(89)99999-9999</span>
<span class="t " style="left:631.7px;top:268.1px;">TURMA 601</span>
<span class="t " style="left:675.5px;top:268.1px;">SALA 5</span>
<span class="t " style="left:703.0px;top:268.1px;">NOITE</span>
<span class="t " style="left:731.4px;top:268.1px;">2018</span>
<span class="t " style="left:56.0px;top:277.3px;">000011</span>
<span class="t " style="left:79.0px;top:277.3px;">RICARDO DE OLIVIERA</span>
<span class="t " style="left:631.7px;top:277.3px;">TURMA 503</span>
<span class="t " style="left:675.5px;top:277.3px;">5</span>
<span class="t " style="left:703.0px;top:277.3px;">MANHÃ</span>
<span class="t " style="left:731.4px;top:277.3px;">2018</span>
<span class="t " style="left:56.0px;top:286.6px;">000009</span>
<span class="t " style="left:79.0px;top:286.6px;">RODRIGO PEIREIRA QUADRADO</span>
<span class="t " style="left:451.1px;top:286.6px;;transform:scaleX(.68)">(99)99999-7777</span>
<span class="t " style="left:496.1px;top:286.6px;;transform:scaleX(.68)">(77)77777-7777</span>
<span class="t " style="left:541.1px;top:286.6px;;transform:scaleX(.68)">(77)77788-8888</span>
<span class="t " style="left:586.1px;top:286.6px;;transform:scaleX(.68)">(88)88888-8777</span>
<span class="t " style="left:631.7px;top:286.6px;">TURMA 503</span>
<span class="t " style="left:675.5px;top:286.6px;">5</span>
<span class="t " style="left:703.0px;top:286.6px;">MANHÃ</span>
<span class="t " style="left:731.4px;top:286.6px;">2018</span>
<span class="t " style="left:56.0px;top:295.9px;">000008</span>
<span class="t " style="left:79.0px;top:295.9px;">VLADIMIR DOS SANTOS RAU</span>
<span class="t " style="left:631.7px;top:295.9px;">TURMA301</span>
<span class="t " style="left:675.5px;top:295.9px;">4</span>
<span class="t " style="left:703.0px;top:295.9px;">MANHÃ</span>
<span class="t " style="left:731.4px;top:295.9px;">2018</span>
<svg class="a" style="left:44.6px;top:297.5px" width="8" height="7"><rect x=".4" y=".4" width="7" height="6" fill="#cfe6f8" stroke="#5a9ad0" stroke-width=".8"/><path d="M1.5 2 L4 2 L4 4" stroke="#2a6ab0" stroke-width=".9" fill="none"/><rect x="4.4" y="3.8" width="2.2" height="2" fill="#1a3a6a"/></svg>
<div class="a" style="left:747.4px;top:101.2px;width:9.4px;height:406.5px;background:#f0f0f0;"></div>
<div class="a" style="left:43.3px;top:507.6px;width:713.2px;height:11.2px;background:#ededed;"></div>
<div class="a" style="left:748.2px;top:113px;width:7.6px;height:10px;box-sizing:border-box;border:1px solid #b4b4b4;border-radius:1.5px;background:linear-gradient(90deg,#f6f6f6,#dcdcdc);"></div>
<div class="a" style="left:52.8px;top:508.2px;width:8.8px;height:10.2px;box-sizing:border-box;border:1px solid #aaaaaa;border-radius:1.5px;background:linear-gradient(#f8f8f8,#d4d4d4);"></div>
<svg class="a" style="left:40px;top:100px" width="720" height="422" viewBox="40 100 720 422"><path d="M750.4 108.3 L752.2 105.8 L754 108.3 Z M750.4 501.2 L754 501.2 L752.2 503.8 Z M48.8 510.6 L48.8 515 L46 512.8 Z M741.6 510.6 L741.6 515 L744.4 512.8 Z" fill="#333"/></svg>
<span class="t lb" style="left:342.5px;top:527.2px;font-size:8.5px;transform:scaleX(0.702);">Para fechar a tela ESC ou botão SAIR</span>
<div class="a" style="left:0;top:583.6px;width:800px;height:15px;background:#f0f0f0;border-top:1px solid #c4c4c4;box-sizing:border-box;"></div>
<div class="a" style="left:0;top:584.6px;width:800px;height:1px;background:#fafafa;"></div>
<div class="pn" style="left:1.5px;width:371px"></div>
<div class="pn" style="left:374.3px;width:19.4px"></div>
<div class="pn" style="left:396.3px;width:17.4px"></div>
<div class="pn" style="left:418px;width:13px"></div>
<div class="pn" style="left:434.7px;width:37.3px"></div>
<div class="pn" style="left:475.3px;width:30px"></div>
<div class="pn" style="left:587.3px;width:80px"></div>
<div class="pn" style="left:670.7px;width:35px"></div>
<div class="pn" style="left:740px;width:37.3px"></div>
<div class="a" style="left:516px;top:586.6px;width:68px;height:11px;background:#20e620;"></div>
<span class="t sb" style="left:4.3px;top:588.5px;">PORTO ALEGRE - RS 24 de Setembro de 2018 - Segunda-feira</span>
<span class="t sb" style="left:377.7px;top:588.5px;">Num</span>
<span class="t sb" style="left:398.7px;top:588.5px;">Caps</span>
<span class="t sb" style="left:420.5px;top:588.5px;color:#b4b4b4">Ins</span>
<span class="t sb" style="left:437.0px;top:588.5px;">24/09/2018</span>
<span class="t sb" style="left:477.7px;top:588.5px;">12:44:10</span>
<span class="t sb" style="left:539.0px;top:588.5px;color:#8a4a1a">MASTER</span>
<span class="t sb" style="left:601.3px;top:588.5px;">DEMO SYSCURSO 3.0</span>
<span class="t sb" style="left:685.7px;top:588.5px;">Email</span>
<span class="t sb" style="left:744.0px;top:588.5px;color:#c81e1e">FpqSystem</span>
<svg class="a" style="left:0;top:580px" width="800" height="20" viewBox="0 579.4 800 20">
<g><rect x="508.3" y="587" width="6.4" height="9" fill="#f4e8a0" stroke="#a89040" stroke-width=".6"/><circle cx="511" cy="590" r="1.6" fill="#d89a20"/><rect x="511.5" y="591.5" width="3" height="4" fill="#4a78c8"/></g>
<g><rect x="590" y="587.4" width="6.5" height="8.6" fill="#fafafa" stroke="#8a9ab0" stroke-width=".6"/><path d="M590.5 593 L596 591 L597.5 595 L592 596.5 Z" fill="#4a8ad8"/></g>
<g><rect x="673" y="587.6" width="7" height="8.4" fill="#fafafa" stroke="#5a7a9a" stroke-width=".7"/><rect x="674" y="587" width="5" height="3" fill="#2a9a4a"/><rect x="677" y="592" width="4" height="4" fill="#3a6ac0"/></g>
<g><rect x="710" y="590" width="8.6" height="5.4" fill="#d8d8d8" stroke="#777" stroke-width=".6"/><rect x="711.6" y="587.4" width="5.4" height="3.4" fill="#fafafa" stroke="#888" stroke-width=".5"/><rect x="712" y="593" width="5" height="3.4" fill="#fafafa" stroke="#888" stroke-width=".5"/></g>
<g><rect x="725" y="587.6" width="8.4" height="5.6" fill="#e8eef4" stroke="#444" stroke-width=".8"/><rect x="728" y="593.4" width="2.4" height="1.4" fill="#444"/><rect x="726" y="594.8" width="6.4" height="1.2" fill="#444"/></g>
<g><rect x="783" y="587" width="6.4" height="9" fill="#f4e8a0" stroke="#a89040" stroke-width=".6"/><circle cx="786" cy="590" r="1.6" fill="#d89a20"/><rect x="786.5" y="591.5" width="3.6" height="4.4" fill="#4a78c8"/></g>
</svg>
<div class="a" style="left:0;top:598.4px;width:800px;height:1.6px;background:#f4f4f4;"></div>
<div class="a" style="left:0px;top:598.5px;width:41px;height:1.5px;box-sizing:border-box;border:1px solid #8c8c8c;border-bottom:none;"></div>
<div class="a" style="left:43.5px;top:598.5px;width:30.0px;height:1.5px;box-sizing:border-box;border:1px solid #8c8c8c;border-bottom:none;"></div>
<div class="a" style="left:77px;top:598.5px;width:31px;height:1.5px;box-sizing:border-box;border:1px solid #8c8c8c;border-bottom:none;"></div>
<div class="a" style="left:112px;top:598.5px;width:31px;height:1.5px;box-sizing:border-box;border:1px solid #8c8c8c;border-bottom:none;"></div>
<div class="a" style="left:146.5px;top:598.5px;width:31.5px;height:1.5px;box-sizing:border-box;border:1px solid #8c8c8c;border-bottom:none;"></div>
<div class="a" style="left:181px;top:598.5px;width:32px;height:1.5px;box-sizing:border-box;border:1px solid #8c8c8c;border-bottom:none;"></div>
<div class="a" style="left:216px;top:598.5px;width:30px;height:1.5px;box-sizing:border-box;border:1px solid #8c8c8c;border-bottom:none;"></div>
</body></html>
